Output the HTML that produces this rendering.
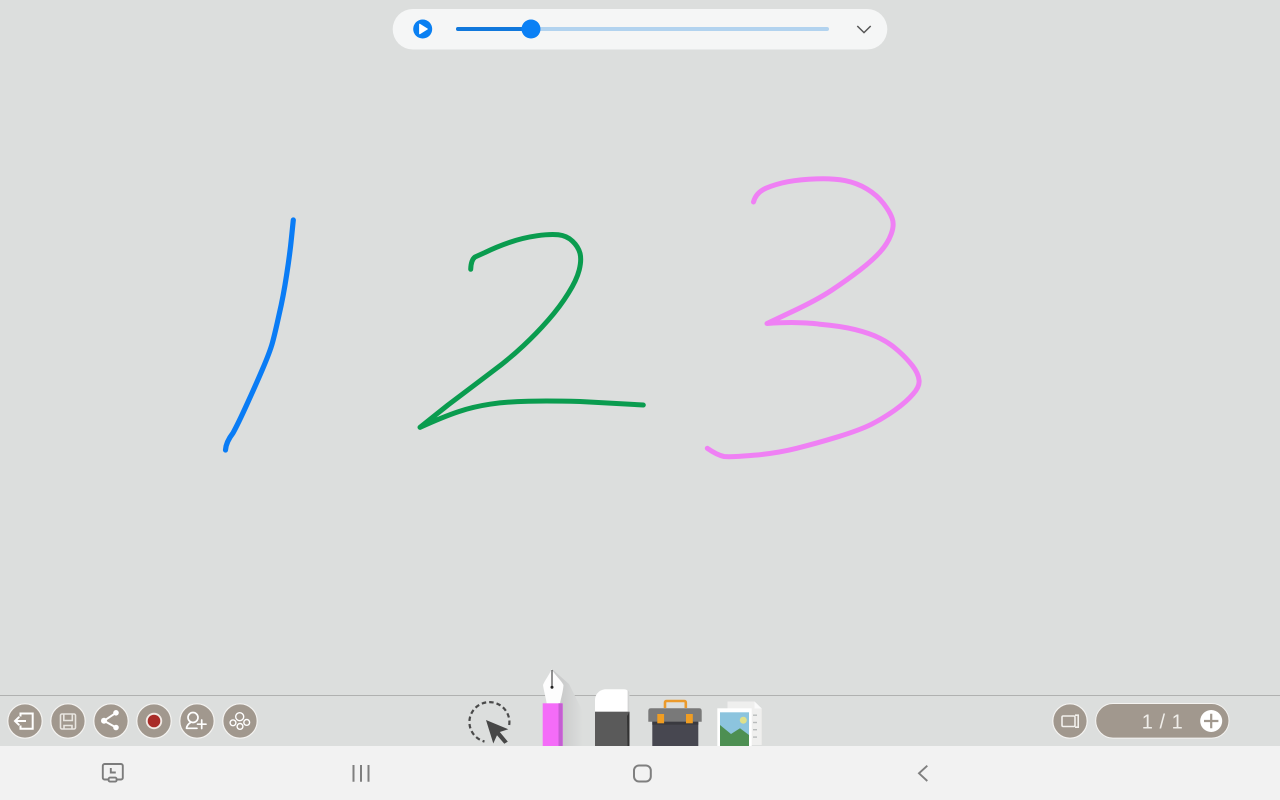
<!DOCTYPE html>
<html lang="en">
<head>
<meta charset="utf-8">
<title>Whiteboard</title>
<style>
html,body{margin:0;padding:0;width:1280px;height:800px;overflow:hidden;background:#dcdedd}
svg{display:block;position:absolute;left:0;top:0;filter:blur(0.3px)}
</style>
</head>
<body>
<svg width="1280" height="800" viewBox="0 0 1280 800" xmlns="http://www.w3.org/2000/svg">
<defs>
<linearGradient id="sh" x1="0" y1="0" x2="1" y2="0"><stop offset="0.35" stop-color="#cbcccc"/><stop offset="1" stop-color="#dcdedd"/></linearGradient>
<clipPath id="cv"><rect x="0" y="0" width="1280" height="746"/></clipPath>
</defs>
<rect width="1280" height="800" fill="#dcdedd"/>

<!-- top player -->
<rect x="392.7" y="9" width="494.6" height="40.5" rx="20.2" fill="#f5f6f6"/>
<circle cx="422.7" cy="29" r="9.5" fill="#0a80f2"/>
<path d="M419.6 24.2V33.8L427.4 29Z" fill="#fff" stroke="#fff" stroke-width="1" stroke-linejoin="round"/>
<line x1="458" y1="29" x2="827" y2="29" stroke="#b2d3ef" stroke-width="4" stroke-linecap="round"/>
<line x1="458" y1="29" x2="531" y2="29" stroke="#1078dc" stroke-width="4" stroke-linecap="round"/>
<circle cx="531" cy="29" r="9.5" fill="#0a80f5"/>
<path d="M857.3 26L864 32.6L870.7 26" fill="none" stroke="#555" stroke-width="1.5"/>

<!-- drawn digits -->
<path d="M293.3 220L291.6 236.6Q290 253.3 286.6 275Q283.3 296.7 279 315Q275 333.3 272.5 342.5Q270 351.7 262.5 369.2Q255 386.7 246.6 405Q238.3 423.3 233 433Q226 442 225.5 450" fill="none" stroke="#0a7cf5" stroke-width="5.2" stroke-linecap="round" stroke-linejoin="round"/>
<path d="M470.7 269.3Q471 260 475 257Q479 255.2 485 252.5Q496.7 246.7 510 242.2Q523.3 237.7 536.7 235.8Q550 234 558.3 234.8Q566.7 235.7 572.5 241.2Q578.3 246.7 580 253.3Q581.7 260 579.2 270Q576.7 280 568.3 293.3Q560 306.7 548.3 320Q536.7 333.3 523.3 345.8Q510 358.3 493.3 370.8Q476.7 383.3 448 405L420 427.3Q443.3 416.7 458.3 411.7Q473.3 406.7 490 404.2Q506.7 401.7 528.3 401.2Q550 400.7 580 401.5L643.3 405" fill="none" stroke="#0a9c4f" stroke-width="5" stroke-linecap="round" stroke-linejoin="round"/>
<path d="M753.5 202Q756 192.5 766 188.2Q776 184 788 181.7Q800 179.5 816.5 178.9Q833 178.3 845 180.6Q857 183 867 189Q877 195 883.5 203.5Q890 212 892.2 218.5Q894.5 225 891.2 234Q888 243 880.5 251.5Q873 260 860 270Q847 280 832 290Q817 300 792 311.7L767 323.5Q785 322.2 800 322.7T820 324.3Q840 326 855 329.6Q870 333.3 880 338.3Q890 343.3 898.3 350.8Q906.7 358.3 912.5 365.8Q918.3 373.3 919 380Q920 386 913.3 393.8Q906.7 401.7 895 410Q883.3 418.3 871.6 424.2Q860 430 838.3 436.7Q816.7 443.3 796.7 448.3Q776.7 453.3 753.3 455.3Q730 457.3 724 456.5Q717 455 707.3 448.3" fill="none" stroke="#ef80f4" stroke-width="5" stroke-linecap="round" stroke-linejoin="round"/>

<!-- toolbar divider -->
<rect x="0" y="695" width="1280" height="1" fill="#b0b1b0"/>

<!-- left round buttons -->
<g fill="#a1988e" stroke="#f4f3f1" stroke-width="1.2">
<circle cx="25" cy="721" r="17.2"/><circle cx="68" cy="721" r="17.2"/><circle cx="111" cy="721" r="17.2"/><circle cx="154" cy="721" r="17.2"/><circle cx="197" cy="721" r="17.2"/><circle cx="240" cy="721" r="17.2"/><circle cx="1070" cy="721" r="17.2"/>
</g>
<!-- exit -->
<g fill="none" stroke="#fff" stroke-width="2">
<path d="M20.5 716.5V713.5H32.7V728.8H20.5V725.5"/>
<path d="M15 721H26"/>
<path d="M19.3 716.8L15 721L19.3 725.2"/>
</g>
<!-- save -->
<g fill="none" stroke="#e8e5e0" stroke-width="1.6">
<rect x="60.5" y="714" width="15" height="15" rx="1.5"/>
<path d="M63.8 714V720.5H72.3V714"/>
<path d="M64 729V725.5H72V729"/>
</g>
<!-- share -->
<g fill="#fff" stroke="#fff">
<path d="M116 712.8L104 720.8L116 727.5" fill="none" stroke-width="2"/>
<circle cx="116" cy="712.8" r="2.8" stroke="none"/>
<circle cx="104" cy="720.8" r="3" stroke="none"/>
<circle cx="116" cy="727.5" r="2.8" stroke="none"/>
</g>
<!-- record -->
<circle cx="154" cy="721" r="8.2" fill="#f2ebe6"/>
<circle cx="154" cy="721" r="6.3" fill="#a92c28"/>
<!-- add user -->
<g fill="none" stroke="#fff" stroke-width="1.7" stroke-linecap="round">
<circle cx="193" cy="717.5" r="5"/>
<path d="M186.5 728.3H197M186.5 728.3C186.8 725 189 723.5 190.5 722.5"/>
<path d="M201.7 720V728.5M197.5 724.2H206"/>
</g>
<!-- collab -->
<g fill="none" stroke="#fff" stroke-width="1.4">
<circle cx="239.7" cy="716.7" r="4"/>
<circle cx="233" cy="722.8" r="2.9"/>
<circle cx="240" cy="726.4" r="2.9"/>
<circle cx="246.7" cy="722.4" r="2.9"/>
</g>

<!-- right controls -->
<g fill="none" stroke="#f2f0ec" stroke-width="1.6">
<rect x="1062" y="716" width="13" height="10.5" rx="1.2"/>
<path d="M1075 715.2H1078.2V727.2H1075"/>
</g>
<rect x="1095.7" y="703.5" width="133.3" height="34.6" rx="17.3" fill="#a1988e" stroke="#f4f3f1" stroke-width="1"/>
<text x="1162.5" y="728.5" text-anchor="middle" font-family="'Liberation Sans',sans-serif" font-size="20" letter-spacing="0.5" fill="#f0eeea">1 / 1</text>
<circle cx="1211.2" cy="721" r="11" fill="#fff"/>
<path d="M1211.2 713.8V728.2M1204 721H1218.4" stroke="#a1988e" stroke-width="2.2"/>

<g clip-path="url(#cv)">
<!-- lasso tool -->
<path d="M509.2 725A20 20 0 1 0 484.5 741.5" fill="none" stroke="#4a4a4a" stroke-width="2.2" stroke-dasharray="4.5 3"/>
<path d="M486 720L508.3 729.3L499.8 732L507.8 741.6L504.3 743.7L497 735.2L493.3 743.5Z" fill="#474747"/>

<!-- pen tool -->
<path d="M552 669L569 684L583 712V746H563V703H552Z" fill="url(#sh)"/>
<path d="M551.7 669.2C549 675 545 680 543 685C544 692 546 698 546.7 703.5H560C561 698 563 692 563.5 685C561 680 555 675 551.7 669.2Z" fill="#fdfdfd"/>
<path d="M552 670V687" stroke="#222" stroke-width="1"/>
<circle cx="552" cy="687.3" r="1.5" fill="#222"/>
<rect x="542.7" y="703.3" width="20" height="43" fill="#f46cf8"/>
<rect x="558.5" y="703.3" width="4.2" height="43" fill="#c45ed2"/>

<!-- eraser tool -->
<path d="M595 711.7V700C595 694 600 689.3 606 689.3H624C627 689.3 629.3 691.5 629.3 694.5V711.7Z" fill="#fff"/>
<path d="M627.6 690L629.4 692V711.7H627.6Z" fill="#d2d3d3"/>
<rect x="595" y="711.7" width="34.5" height="34.5" fill="#5a5a5a"/>
<path d="M627 716L629.5 711.7V746.2H627.5Z" fill="#333"/>

<!-- toolbox -->
<path d="M665 708V702.6Q665 701 666.8 701H684Q685.8 701 685.8 702.6V708" fill="none" stroke="#eb9a2c" stroke-width="2.6"/>
<path d="M648.3 721.7V711Q648.3 708.3 651 708.3H699Q701.7 708.3 701.7 711V721.7Z" fill="#797979"/>
<rect x="652.3" y="721.7" width="46" height="24.5" fill="#474750"/>
<rect x="652.3" y="721.7" width="46" height="3" fill="#3a3a40"/>
<rect x="657.3" y="714" width="6.8" height="9.3" fill="#f09d22"/>
<rect x="686" y="714" width="6.8" height="9.3" fill="#f09d22"/>

<!-- image tool -->
<path d="M727.5 701.5H754.5L761.7 708.5V745H727.5Z" fill="#efefee"/>
<path d="M754.5 701.5L761.7 708.5H754.5Z" fill="#fafafa"/>
<g fill="#b9bcbc"><rect x="753" y="714.5" width="4" height="1.4"/><rect x="753" y="721.8" width="4" height="1.4"/><rect x="753" y="729" width="4" height="1.4"/><rect x="753" y="736.4" width="4" height="1.4"/></g>
<rect x="717.3" y="708.3" width="34.4" height="38" fill="#fff"/>
<rect x="720" y="712.3" width="29" height="34" fill="#8cc4de"/>
<circle cx="743.3" cy="720.2" r="3.5" fill="#dfe08a"/>
<path d="M720 725L731 734L740 728.3L749 735V746.5H720Z" fill="#4d8f52"/>
</g>

<!-- navigation bar -->
<rect x="0" y="746" width="1280" height="54" fill="#f2f2f2"/>
<g fill="none" stroke="#7c7c7c" stroke-width="1.9">
<rect x="102.8" y="764" width="20" height="15.5" rx="1.8"/>
<rect x="108.6" y="777.6" width="8" height="4" rx="1.5" fill="#f2f2f2"/>
<path d="M110.8 768V772.5H115.8"/>
</g>
<g stroke="#7f7f7f" stroke-width="2"><path d="M353.5 765V781.7M361 765V781.7M368.5 765V781.7"/></g>
<rect x="634" y="765.5" width="16.8" height="16" rx="5" fill="none" stroke="#7f7f7f" stroke-width="2"/>
<path d="M927.3 765.7L919 773.3L927.3 781" fill="none" stroke="#7f7f7f" stroke-width="1.9"/>
</svg>
</body>
</html>
